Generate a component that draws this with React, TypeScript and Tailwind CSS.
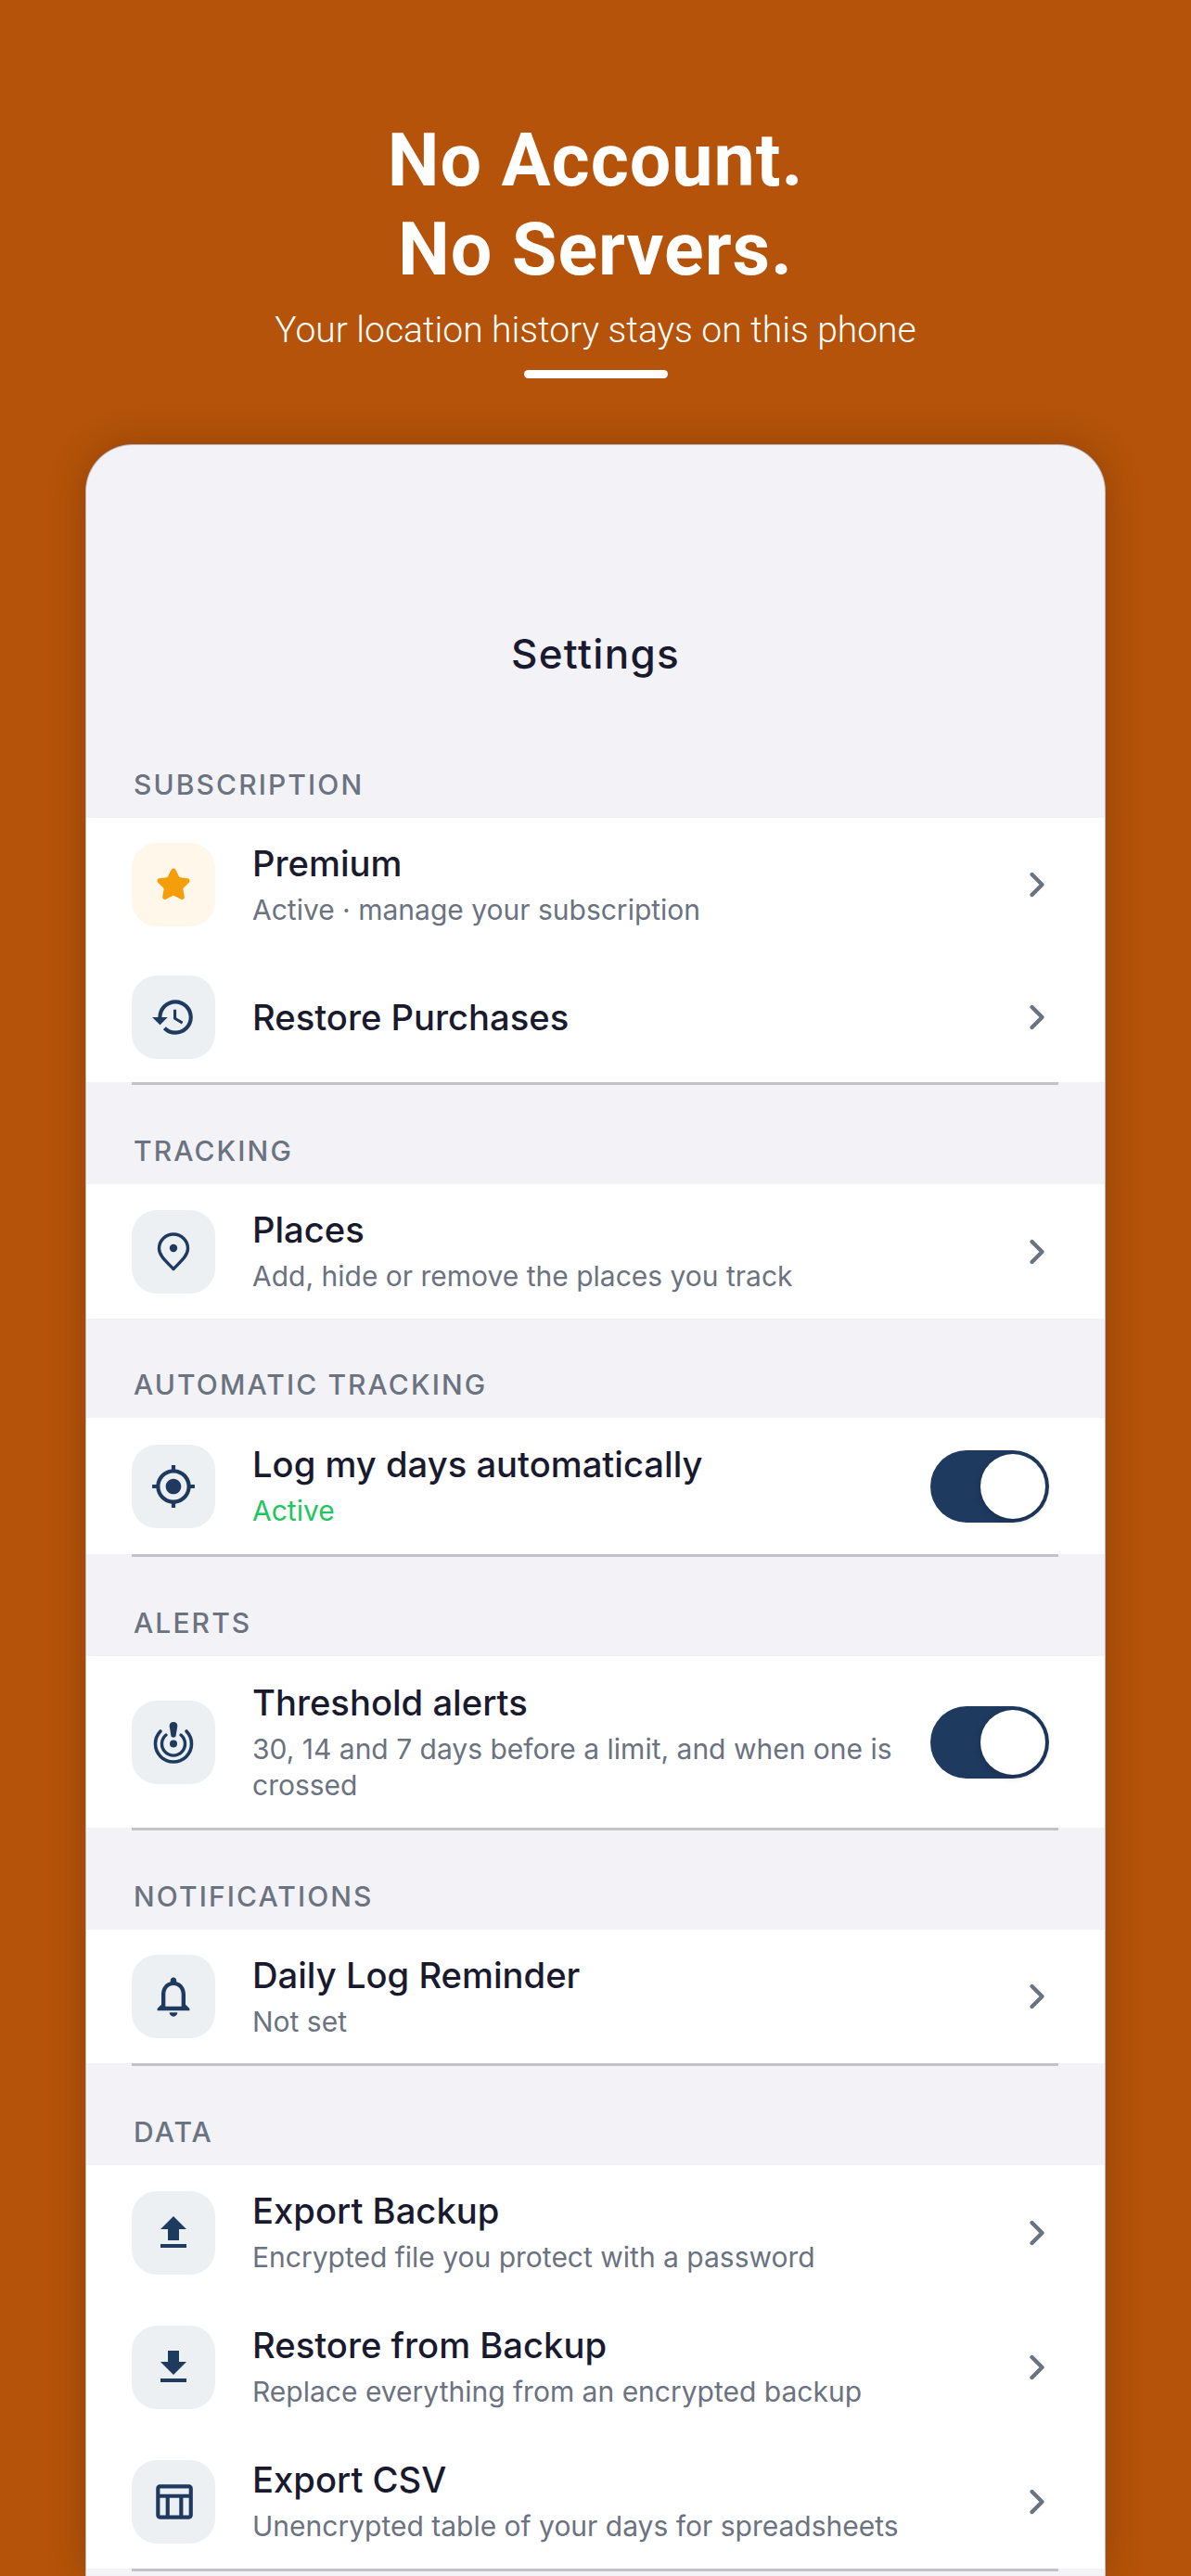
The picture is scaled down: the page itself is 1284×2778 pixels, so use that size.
import React from 'react';
import { ChevronRight, Star } from 'lucide-react';
import {
  MdGpsFixed,
  MdHistory,
  MdFileDownload,
  MdFileUpload,
  MdOutlineNotifications,
  MdOutlineTableChart,
} from 'react-icons/md';

const PinIcon = () => (
  <svg width="36" height="42" viewBox="0 0 36 42" fill="none">
    <path
      d="M18 39.5C11 32 2.5 25.5 2.5 17.5a15.5 15.5 0 0 1 31 0C33.5 25.5 25 32 18 39.5Z"
      stroke="#1e3a5f"
      strokeWidth="3.4"
      strokeLinejoin="round"
    />
    <circle cx="18" cy="17" r="4.2" fill="#1e3a5f" />
  </svg>
);

const AlertTargetIcon = () => (
  <svg width="44" height="46" viewBox="0 0 44 46" fill="none">
    <path d="M8 11a19.5 19.5 0 1 0 28 0" stroke="#1e3a5f" strokeWidth="3.6" strokeLinecap="round" />
    <path d="M14 15a12.5 12.5 0 1 0 16 0" stroke="#1e3a5f" strokeWidth="3.4" strokeLinecap="round" />
    <circle cx="22" cy="24.5" r="4" fill="#1e3a5f" />
    <path d="M22 1c2.8 0 4.5 2 4.3 4.5L24.6 16c-.3 2.3-5 2.3-5.2 0L17.7 5.5C17.5 3 19.2 1 22 1Z" fill="#1e3a5f" />
  </svg>
);

type RowData = {
  title: string;
  sub?: string;
  subClass?: string;
  icon: React.ReactNode;
  iconBg?: string;
  toggle?: boolean;
  height: string;
};

type SectionData = { label: string; rows: RowData[]; divider?: boolean };

const navy = 'text-[#1e3a5f]';

const sections: SectionData[] = [
  {
    label: 'SUBSCRIPTION',
    divider: true,
    rows: [
      {
        title: 'Premium',
        sub: 'Active · manage your subscription',
        icon: <Star className="text-[#f59e0b]" fill="#f59e0b" size={38} strokeWidth={2.2} />,
        iconBg: 'bg-[#fff7ea]',
        height: 'h-[144px]',
      },
      {
        title: 'Restore Purchases',
        icon: <MdHistory className={navy} size={50} />,
        height: 'h-[141px]',
      },
    ],
  },
  {
    label: 'TRACKING',
    rows: [
      {
        title: 'Places',
        sub: 'Add, hide or remove the places you track',
        icon: <PinIcon />,
        height: 'h-[145px]',
      },
    ],
  },
  {
    label: 'AUTOMATIC TRACKING',
    divider: true,
    rows: [
      {
        title: 'Log my days automatically',
        sub: 'Active',
        subClass: 'text-[#22c55e]',
        icon: <MdGpsFixed className={navy} size={50} />,
        toggle: true,
        height: 'h-[147px]',
      },
    ],
  },
  {
    label: 'ALERTS',
    divider: true,
    rows: [
      {
        title: 'Threshold alerts',
        sub: '30, 14 and 7 days before a limit, and when one is crossed',
        icon: <AlertTargetIcon />,
        toggle: true,
        height: 'h-[185px]',
      },
    ],
  },
  {
    label: 'NOTIFICATIONS',
    divider: true,
    rows: [
      {
        title: 'Daily Log Reminder',
        sub: 'Not set',
        icon: <MdOutlineNotifications className={navy} size={52} />,
        height: 'h-[144px]',
      },
    ],
  },
  {
    label: 'DATA',
    divider: true,
    rows: [
      {
        title: 'Export Backup',
        sub: 'Encrypted file you protect with a password',
        icon: <MdFileUpload className={navy} size={48} />,
        height: 'h-[145px]',
      },
      {
        title: 'Restore from Backup',
        sub: 'Replace everything from an encrypted backup',
        icon: <MdFileDownload className={navy} size={48} />,
        height: 'h-[145px]',
      },
      {
        title: 'Export CSV',
        sub: 'Unencrypted table of your days for spreadsheets',
        icon: <MdOutlineTableChart className={navy} size={50} />,
        height: 'h-[145px]',
      },
    ],
  },
];

const Toggle = () => (
  <div className="flex h-[78px] w-[128px] shrink-0 items-center justify-end rounded-full bg-[#1e3a5f] pr-[4px]">
    <div className="h-[70px] w-[70px] rounded-full bg-white shadow-[0_2px_8px_rgba(0,0,0,0.2)]" />
  </div>
);

const Row = ({ row }: { row: RowData }) => (
  <div className={`flex items-center pl-[49px] pr-[60px] ${row.height}`}>
    <div
      className={`flex h-[90px] w-[90px] shrink-0 items-center justify-center rounded-[27px] ${row.iconBg ?? 'bg-[#edf0f3]'}`}
    >
      {row.icon}
    </div>
    <div className="ml-[40px] min-w-0 flex-1">
      <div className="text-[38.2px] font-[450] leading-[46px] text-[#1a1a2e]">{row.title}</div>
      {row.sub && (
        <div className={`mt-[8px] text-[30px] leading-[39px] ${row.subClass ?? 'text-[#6b7280]'}`}>{row.sub}</div>
      )}
    </div>
    {row.toggle ? (
      <div className="ml-[36px]">
        <Toggle />
      </div>
    ) : (
      <ChevronRight className="-mr-[9px] ml-4 shrink-0 text-[#6b7280]" size={44} strokeWidth={2.4} />
    )}
  </div>
);

const Section = ({ section }: { section: SectionData }) => (
  <section>
    <div className="flex h-[107px] items-end pb-[22px] pl-[51px] text-[30px] font-medium leading-[28px] tracking-[0.07em] text-[#6b7280]">
      {section.label}
    </div>
    <div className="bg-white">
      {section.rows.map((row) => (
        <Row key={row.title} row={row} />
      ))}
    </div>
    {section.divider && <div className="ml-[49px] mr-[50px] h-[3px] bg-[#c2c2c8]" />}
  </section>
);

export default function App() {
  return (
    <div className="h-[2778px] w-[1284px] overflow-hidden bg-[#b45309] font-['Inter',sans-serif]">
      <header className="flex h-[480px] flex-col items-center pt-[125px] text-white">
        <h1 className="text-center font-['Roboto',sans-serif] text-[79px] font-bold leading-[96px] tracking-[0.012em]">
          No Account.
          <br />
          No Servers.
        </h1>
        <p className="mt-[15px] font-['Roboto',sans-serif] text-[39px] font-[350] leading-[48px]">
          Your location history stays on this phone
        </p>
        <div className="mt-[19px] h-[9px] w-[155px] rounded-full bg-white" />
      </header>
      <main className="mx-[93px] h-[2298px] overflow-hidden rounded-t-[50px] bg-[#f2f2f7] shadow-[0_0_44px_rgba(0,0,0,0.2),0_0_0_1px_#c9c9d2]">
        <div className="flex h-[295px] items-start justify-center pt-[200px] text-[44px] font-[550] leading-[50px] tracking-[0.03em] text-[#1a1a2e]">
          Settings
        </div>
        {sections.map((section) => (
          <Section key={section.label} section={section} />
        ))}
      </main>
    </div>
  );
}
